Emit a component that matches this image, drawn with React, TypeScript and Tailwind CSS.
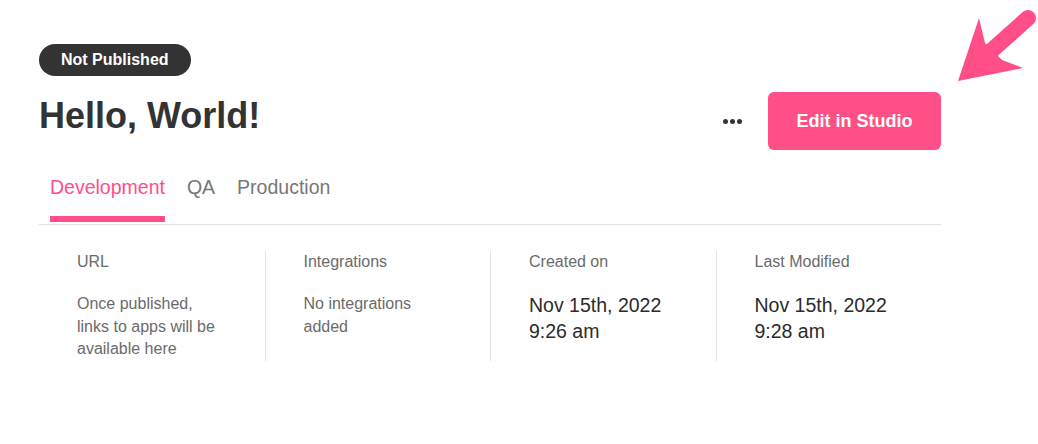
import React from "react";

const PINK = "#ff4f86";

export default function App() {
  const tabs = ["Development", "QA", "Production"];
  const cols = [
    { label: "URL", body: ["Once published,", "links to apps will be", "available here"], kind: "muted" },
    { label: "Integrations", body: ["No integrations", "added"], kind: "muted" },
    { label: "Created on", body: ["Nov 15th, 2022", "9:26 am"], kind: "date" },
    { label: "Last Modified", body: ["Nov 15th, 2022", "9:28 am"], kind: "date" },
  ];
  return (
    <div
      className="relative w-[1038px] h-[444px] bg-white overflow-hidden"
      style={{ fontFamily: '"Liberation Sans", Arial, sans-serif' }}
    >
      <svg className="absolute left-[950px] top-0" width="88" height="90" viewBox="950 0 88 90">
        <line x1="1028" y1="18" x2="990" y2="52" stroke={PINK} strokeWidth="16" strokeLinecap="round" />
        <polygon points="979,18 958,81 1023,68 1002,60 985,43" fill={PINK} />
      </svg>

      <div className="ml-[39px] w-[902px] pt-[44px]">
        <div className="inline-flex h-8 items-center rounded-full bg-[#333333] px-[22px] text-[16px] font-bold text-white">
          Not Published
        </div>

        <div className="mt-[16px] flex items-start justify-between">
          <h1 className="pt-[3px] text-[36px] font-bold leading-[41px] text-[#333333]">Hello, World!</h1>
          <div className="flex items-center gap-[26px]">
            <div className="flex items-center gap-[2px]">
              <span className="block h-[5px] w-[5px] rounded-full bg-[#333333]" />
              <span className="block h-[5px] w-[5px] rounded-full bg-[#333333]" />
              <span className="block h-[5px] w-[5px] rounded-full bg-[#333333]" />
            </div>
            <button className="flex h-[58px] w-[173px] items-center justify-center rounded-[6px] bg-[#ff4f86] text-[18px] font-bold text-white">
              Edit in Studio
            </button>
          </div>
        </div>

        <div className="mt-[26px] flex gap-[22px] border-b border-[#e3e3e3] pl-[11px]">
          {tabs.map((t, i) => (
            <div key={t} className="flex flex-col pb-[2px]">
              <span
                className={
                  "text-[19.5px] leading-[22px] " + (i === 0 ? "text-[#ff4f86]" : "text-[#777777]")
                }
              >
                {t}
              </span>
              <span className={"mt-[18px] block h-[6px] " + (i === 0 ? "bg-[#ff4f86]" : "bg-transparent")} />
            </div>
          ))}
        </div>

        <div className="mt-[26px] grid grid-cols-4">
          {cols.map((c, i) => (
            <div key={c.label} className={"pl-[38px] " + (i > 0 ? "border-l border-[#e3e3e3]" : "")}>
              <div className="text-[16px] leading-[22px] text-[#6b6b6b]">{c.label}</div>
              {c.kind === "muted" ? (
                <div className="mt-[20px] text-[16px] leading-[22.5px] text-[#6b6b6b]">
                  {c.body.map((l) => (
                    <div key={l}>{l}</div>
                  ))}
                </div>
              ) : (
                <div className="mt-[19px] text-[19.5px] leading-[26px] text-[#2b2b2b]">
                  {c.body.map((l) => (
                    <div key={l}>{l}</div>
                  ))}
                </div>
              )}
            </div>
          ))}
        </div>
      </div>
    </div>
  );
}
